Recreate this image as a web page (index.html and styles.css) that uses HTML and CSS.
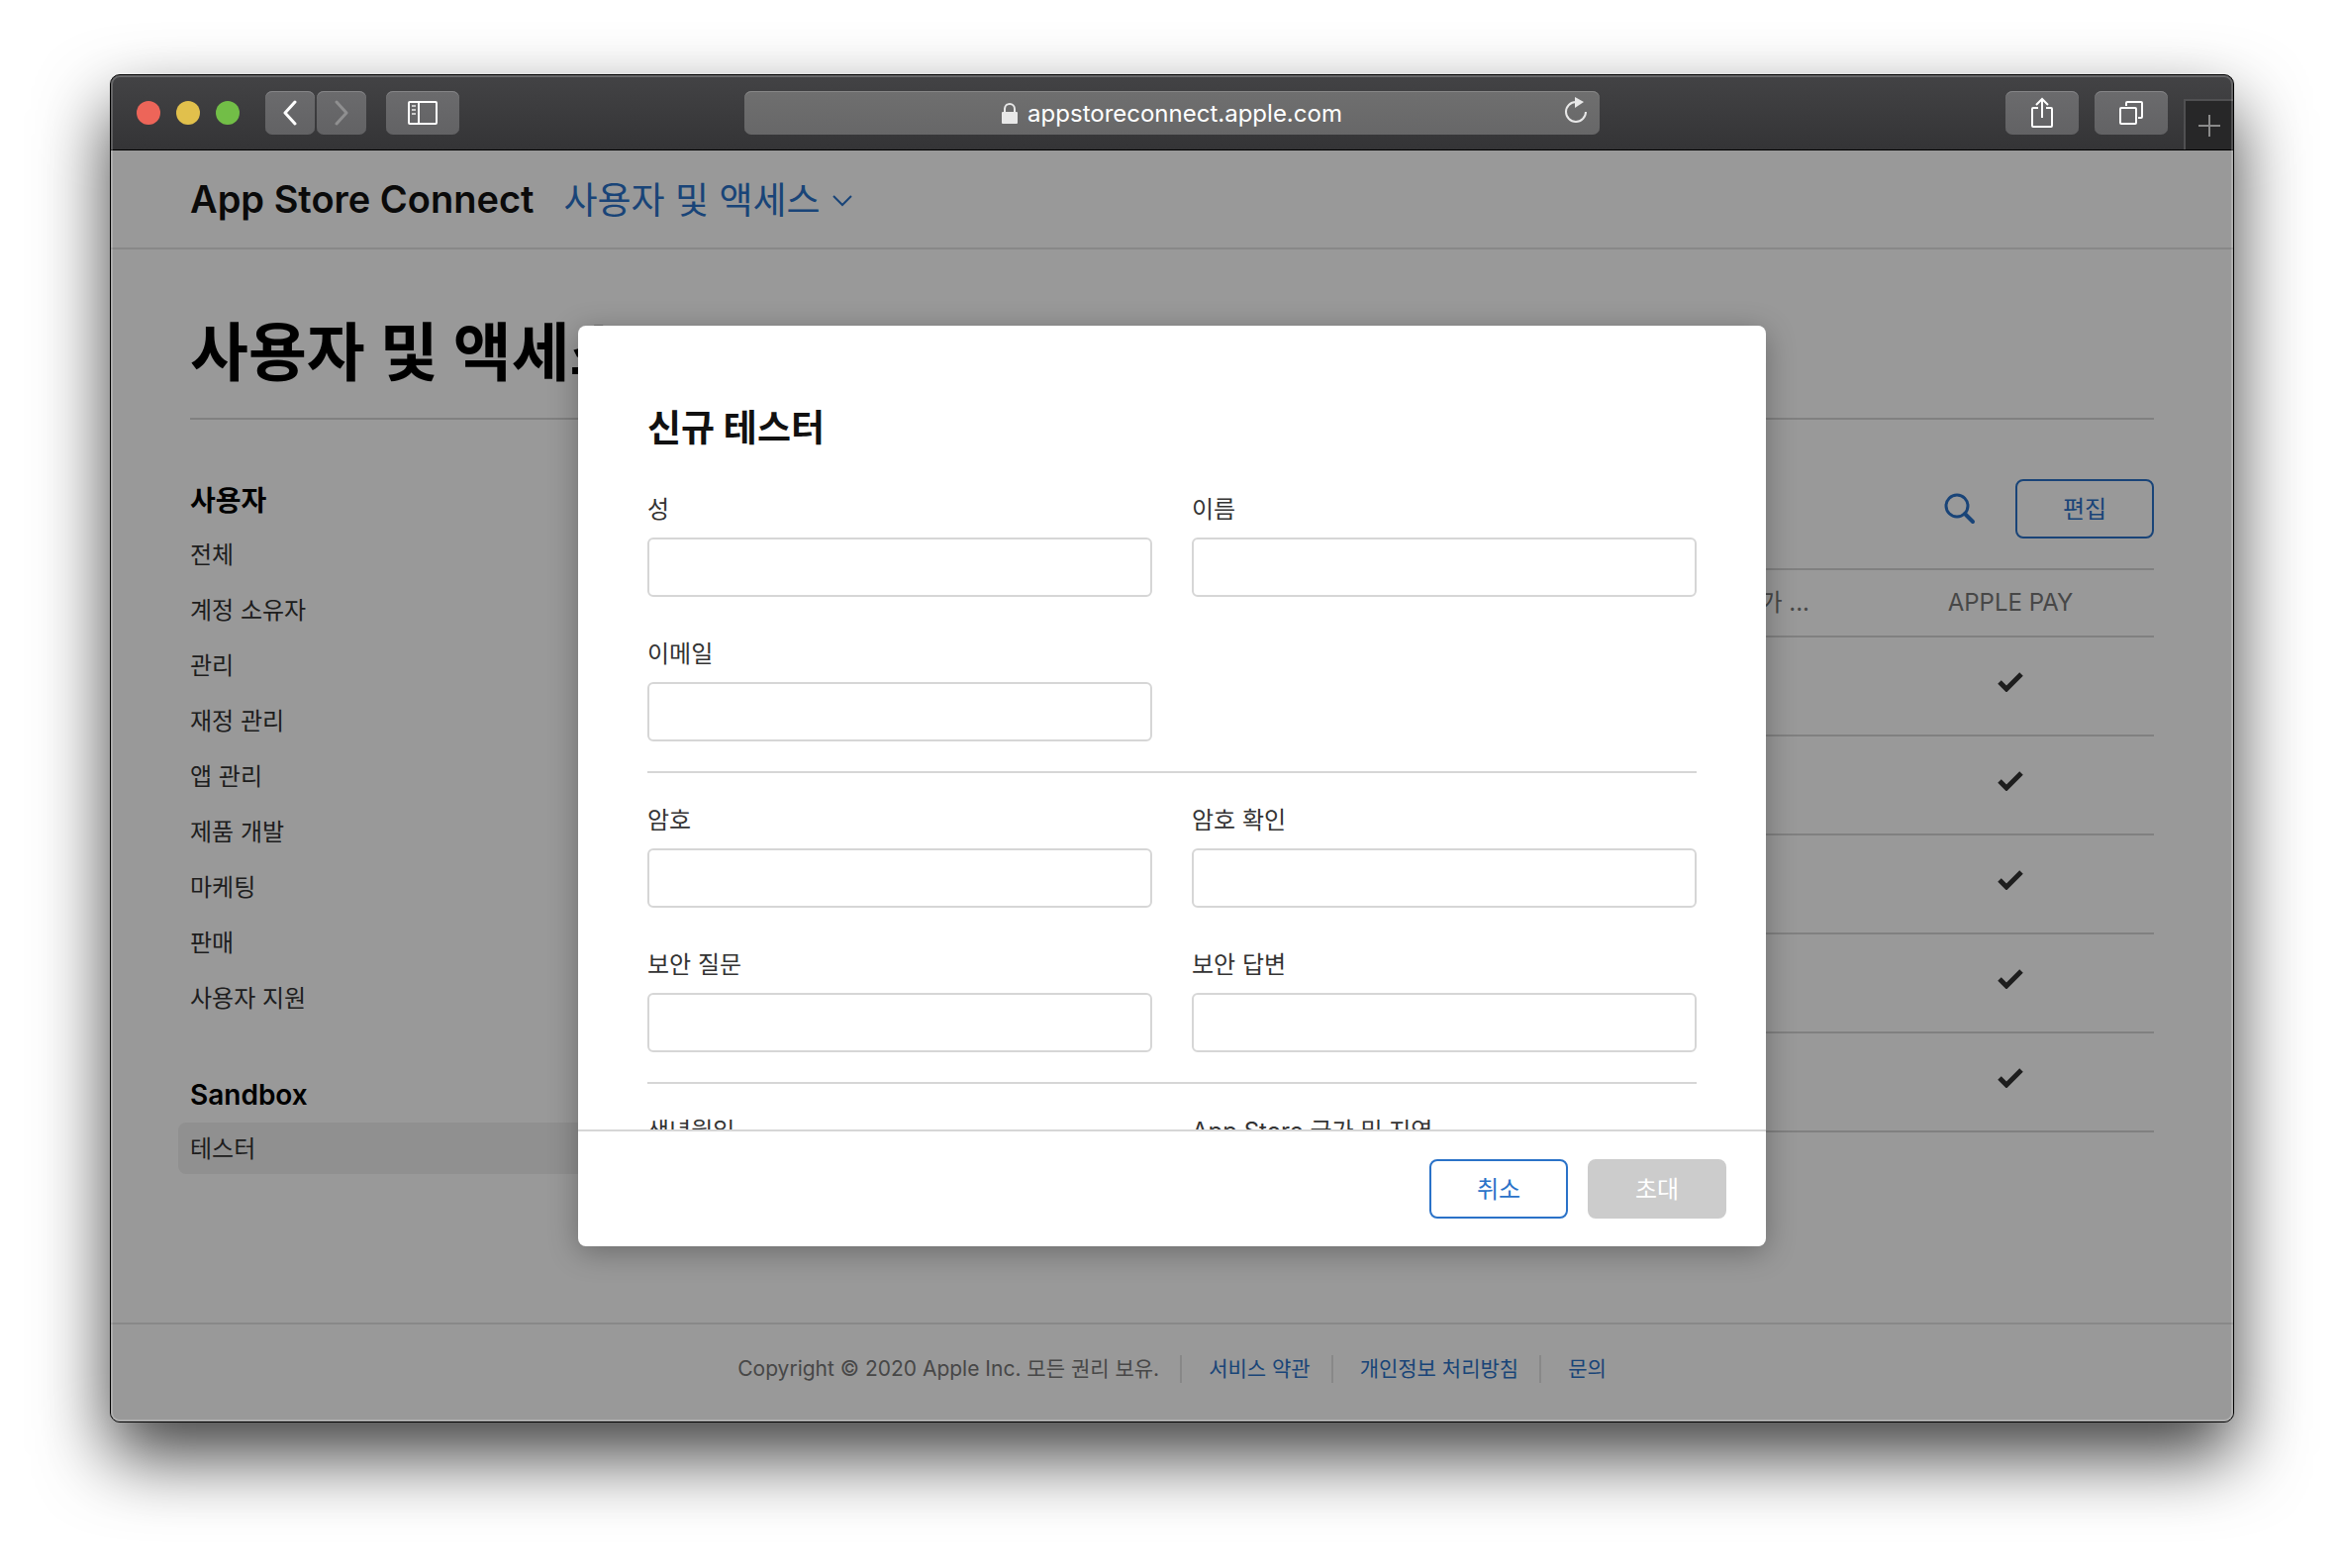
FILE: index.html
```html
<!DOCTYPE html>
<html lang="ko">
<head>
  <meta charset="UTF-8">
  <meta name="viewport" content="width=device-width, initial-scale=1.0">
  <title>App Store Connect</title>
  <link rel="stylesheet" href="styles.css">
</head>
<body>
  <div class="window">
    <!-- 브라우저 툴바 -->
    <div class="toolbar">
      <div class="toolbar-left">
        <div class="lights">
          <span class="light red"></span>
          <span class="light yellow"></span>
          <span class="light green"></span>
        </div>
        <div class="history">
          <button class="tool-btn small" type="button" aria-label="뒤로">
            <svg width="14" height="26" viewBox="0 0 14 26"><path d="M12 2L2 13l10 11" fill="none" stroke="#fff" stroke-width="3" stroke-linecap="round" stroke-linejoin="round"/></svg>
          </button>
          <button class="tool-btn small" type="button" aria-label="앞으로">
            <svg width="14" height="26" viewBox="0 0 14 26"><path d="M2 2l10 11L2 24" fill="none" stroke="#8f8f90" stroke-width="3" stroke-linecap="round" stroke-linejoin="round"/></svg>
          </button>
        </div>
        <button class="tool-btn" type="button" aria-label="사이드바">
          <svg width="30" height="24" viewBox="0 0 30 24" fill="none" stroke="#fff" stroke-width="2">
            <rect x="1" y="1" width="28" height="22" rx="1"/>
            <path d="M11 1v22"/>
            <path d="M4 5h4M4 9h4M4 13h4" stroke="#ccc"/>
          </svg>
        </button>
      </div>

      <div class="address">
        <svg width="16" height="22" viewBox="0 0 16 22"><rect y="9" width="16" height="12" rx="1" fill="#e8e8e8"/><path d="M3 10V6a5 5 0 0 1 10 0v4" fill="none" stroke="#e8e8e8" stroke-width="2"/></svg>
        <span>appstoreconnect.apple.com</span>
        <button class="reload" type="button" aria-label="새로 고침">
          <svg width="24" height="28" viewBox="0 0 24 28"><path d="M12 5a10 10 0 1 0 10 10" fill="none" stroke="#e8e8e8" stroke-width="2"/><path d="M11 0l9 5-9 6z" fill="#e8e8e8"/></svg>
        </button>
      </div>

      <div class="toolbar-right">
        <button class="tool-btn" type="button" aria-label="공유">
          <svg width="24" height="32" viewBox="0 0 24 32" fill="none" stroke="#fff" stroke-width="2" stroke-linejoin="round">
            <path d="M8 11H3a1 1 0 0 0-1 1v17a1 1 0 0 0 1 1h18a1 1 0 0 0 1-1V12a1 1 0 0 0-1-1h-5"/>
            <path d="M12 21V2M6 8l6-6 6 6" stroke-linejoin="miter"/>
          </svg>
        </button>
        <button class="tool-btn" type="button" aria-label="탭 개요">
          <svg width="24" height="24" viewBox="0 0 24 24" fill="none" stroke="#fff" stroke-width="2">
            <rect x="1" y="7" width="16" height="16" rx="1"/>
            <path d="M7 5V2a1 1 0 0 1 1-1h14a1 1 0 0 1 1 1v14a1 1 0 0 1-1 1h-3"/>
          </svg>
        </button>
        <button class="new-tab" type="button" aria-label="새로운 탭">
          <svg width="22" height="22" viewBox="0 0 22 22"><path d="M11 0v22M0 11h22" stroke="#8a8a8a" stroke-width="2"/></svg>
        </button>
      </div>
    </div>

    <div class="page">
      <header class="header">
        <a class="brand" href="#">App Store Connect</a>
        <a class="section-link" href="#">사용자 및 액세스
          <svg width="20" height="12" viewBox="0 0 20 12"><path d="M1 1l9 9 9-9" fill="none" stroke="currentColor" stroke-width="2"/></svg>
        </a>
      </header>

      <main class="main">
        <h1>사용자 및 액세스</h1>
        <div class="columns">
          <nav class="sidebar">
            <h2>사용자</h2>
            <ul>
              <li><a href="#">전체</a></li>
              <li><a href="#">계정 소유자</a></li>
              <li><a href="#">관리</a></li>
              <li><a href="#">재정 관리</a></li>
              <li><a href="#">앱 관리</a></li>
              <li><a href="#">제품 개발</a></li>
              <li><a href="#">마케팅</a></li>
              <li><a href="#">판매</a></li>
              <li><a href="#">사용자 지원</a></li>
            </ul>
            <h2>Sandbox</h2>
            <ul>
              <li><a class="active" href="#">테스터</a></li>
            </ul>
          </nav>

          <section class="testers">
            <div class="actions">
              <button class="search" type="button" aria-label="검색">
                <svg width="32" height="32" viewBox="0 0 32 32" fill="none" stroke="currentColor"><circle cx="13" cy="13" r="11" stroke-width="3"/><path d="M21 21l8 8" stroke-width="4" stroke-linecap="round"/></svg>
              </button>
              <button class="btn" type="button">편집</button>
            </div>
            <table>
              <thead>
                <tr><th class="country">국가 ...</th><th class="pay">APPLE PAY</th></tr>
              </thead>
              <tbody>
                <tr><td></td><td class="pay"><svg class="check" viewBox="0 0 26 20"><path d="M2 10l7 7L24 2" /></svg></td></tr>
                <tr><td></td><td class="pay"><svg class="check" viewBox="0 0 26 20"><path d="M2 10l7 7L24 2" /></svg></td></tr>
                <tr><td></td><td class="pay"><svg class="check" viewBox="0 0 26 20"><path d="M2 10l7 7L24 2" /></svg></td></tr>
                <tr><td></td><td class="pay"><svg class="check" viewBox="0 0 26 20"><path d="M2 10l7 7L24 2" /></svg></td></tr>
                <tr><td></td><td class="pay"><svg class="check" viewBox="0 0 26 20"><path d="M2 10l7 7L24 2" /></svg></td></tr>
              </tbody>
            </table>
          </section>
        </div>
      </main>

      <footer class="footer">
        <span>Copyright © 2020 Apple Inc. 모든 권리 보유.</span>
        <a href="#">서비스 약관</a>
        <a href="#">개인정보 처리방침</a>
        <a href="#">문의</a>
      </footer>

      <!-- 신규 테스터 모달 -->
      <div class="overlay">
        <form class="modal" role="dialog" aria-labelledby="modalTitle">
          <div class="modal-body">
            <h2 id="modalTitle">신규 테스터</h2>
            <div class="fields">
              <div class="field"><label for="lastName">성</label><input type="text" id="lastName"></div>
              <div class="field"><label for="firstName">이름</label><input type="text" id="firstName"></div>
              <div class="field"><label for="email">이메일</label><input type="email" id="email"></div>
            </div>
            <div class="fields">
              <div class="field"><label for="password">암호</label><input type="password" id="password"></div>
              <div class="field"><label for="confirm">암호 확인</label><input type="password" id="confirm"></div>
              <div class="field"><label for="question">보안 질문</label><input type="text" id="question"></div>
              <div class="field"><label for="answer">보안 답변</label><input type="text" id="answer"></div>
            </div>
            <div class="fields">
              <div class="field"><label for="birth">생년월일</label><input type="text" id="birth"></div>
              <div class="field"><label for="region">App Store 국가 및 지역</label><input type="text" id="region"></div>
            </div>
          </div>
          <div class="modal-footer">
            <button class="btn" type="button">취소</button>
            <button class="btn" type="submit" disabled>초대</button>
          </div>
        </form>
      </div>
    </div>
  </div>
</body>
</html>
```

FILE: styles.css
```css
* {
  margin: 0;
  padding: 0;
  box-sizing: border-box;
}
body {
  min-height: 100vh;
  padding: 75px 111px 147px;
  display: flex;
  background: #fff;
  color: #333;
  font-family: Inter, "Noto Sans CJK KR", sans-serif;
  font-size: 24px;
  line-height: 32px;
}
a {
  color: #2a72c8;
  text-decoration: none;
}
button {
  font: inherit;
  border: none;
  background: none;
  cursor: pointer;
}
svg {
  display: block;
}
ul {
  list-style: none;
}

.window {
  flex: 1;
  min-width: 0;
  display: flex;
  flex-direction: column;
  position: relative;
  border: 1px solid #000;
  border-radius: 10px;
  overflow: hidden;
  background: #3a3a3c;
  box-shadow: 0 34px 72px rgba(0, 0, 0, 0.75);
}
/* light edge inside the window frame */
.window::after {
  content: "";
  position: absolute;
  inset: 0;
  border: 2px solid rgba(255, 255, 255, 0.2);
  border-radius: 9px;
  pointer-events: none;
}

/* toolbar */
.toolbar {
  height: 76px;
  padding: 1px 0 0 26px;
  display: grid;
  grid-template-columns: 1fr minmax(0, 864px) 1fr;
  align-items: center;
  background: linear-gradient(#434345, #343436);
  border-bottom: 1px solid #000;
}
.toolbar-left {
  display: flex;
  align-items: center;
  gap: 20px;
  margin-right: 26px;
}
.lights {
  display: flex;
  gap: 16px;
  margin-right: 6px;
}
.light {
  width: 24px;
  height: 24px;
  border-radius: 50%;
}
.red { background: #ed6559; }
.yellow { background: #e1c04c; }
.green { background: #72be47; }
.history {
  display: flex;
  gap: 2px;
}
.tool-btn {
  width: 74px;
  height: 44px;
  display: flex;
  align-items: center;
  justify-content: center;
  border-radius: 7px;
  background: linear-gradient(#6b6b6d, #626264);
  box-shadow: inset 0 1px #858587;
}
.tool-btn.small {
  width: 50px;
}
.address {
  height: 44px;
  margin: 0 13px 0 -13px;
  padding-top: 2px;
  display: flex;
  align-items: center;
  justify-content: center;
  gap: 10px;
  position: relative;
  border-radius: 7px;
  background: linear-gradient(#6f6f6f, #676768);
  box-shadow: inset 0 1px #888;
  color: #fff;
}
.reload {
  position: absolute;
  right: 12px;
  top: 6px;
}
.toolbar-right {
  height: 74px;
  display: flex;
  align-items: center;
  justify-content: flex-end;
  gap: 16px;
}
.new-tab {
  width: 50px;
  height: 51px;
  align-self: flex-end;
  display: flex;
  align-items: center;
  justify-content: center;
  background: #272728;
  border-top: 2px solid #505052;
  border-left: 2px solid #505052;
}

/* page */
.page {
  flex: 1;
  display: flex;
  flex-direction: column;
  position: relative;
  background: #fff;
}
.header {
  height: 100px;
  padding: 0 80px;
  display: flex;
  align-items: center;
  gap: 30px;
  border-bottom: 2px solid #e3e3e3;
  font-size: 37px;
  line-height: 56px;
}
.brand {
  color: #111;
  font-size: 38px;
  font-weight: 600;
}
.section-link {
  display: flex;
  align-items: center;
  gap: 12px;
  padding-top: 4px;
}
.main {
  flex: 1;
  padding: 0 80px;
}
h1 {
  padding: 64px 0 26px;
  border-bottom: 2px solid #d6d6d6;
  color: #000;
  font-size: 64px;
  line-height: 80px;
}
.columns {
  display: flex;
  padding: 60px 0;
}
.sidebar {
  width: 420px;
}
.sidebar h2 {
  padding-top: 2px;
  margin-bottom: 8px;
  color: #000;
  font-size: 28px;
  line-height: 40px;
  font-weight: 600;
}
.sidebar ul {
  display: grid;
  gap: 4px;
  margin-bottom: 50px;
}
.sidebar ul:last-child {
  margin-bottom: 0;
}
.sidebar a {
  display: block;
  margin-left: -12px;
  padding: 11px 12px 9px;
  border-radius: 8px;
  color: #333;
}
.sidebar .active {
  background: #f0f0f0;
}
.testers {
  flex: 1;
  margin-left: 60px;
}
.actions {
  display: flex;
  align-items: center;
  justify-content: flex-end;
  gap: 40px;
  margin-bottom: 30px;
}
.search {
  color: #2a72c8;
}
.btn {
  width: 140px;
  height: 60px;
  padding-top: 2px;
  border: 2px solid #2a72c8;
  border-radius: 8px;
  color: #2a72c8;
}
.btn:disabled {
  border-color: #ccc;
  background: #ccc;
  color: #fff;
  cursor: default;
}
table {
  width: 100%;
  border-spacing: 0;
}
th {
  height: 70px;
  border-top: 2px solid #d6d6d6;
  border-bottom: 2px solid #d6d6d6;
  color: #777;
  font-weight: 400;
}
td {
  height: 100px;
  border-bottom: 2px solid #d6d6d6;
}
.country {
  padding-right: 58px;
  text-align: right;
}
.pay {
  width: 290px;
  text-align: center;
}
.check {
  width: 26px;
  height: 20px;
  margin: 0 auto 8px;
  fill: none;
  stroke: #333;
  stroke-width: 5;
}

.footer {
  height: 100px;
  padding-bottom: 8px;
  display: flex;
  align-items: center;
  justify-content: center;
  border-top: 2px solid #e3e3e3;
  color: #777;
  font-size: 21px;
  line-height: 28px;
}
.footer a {
  margin-left: 21px;
  padding-left: 27px;
  border-left: 2px solid #e3e3e3;
}

/* modal */
.overlay {
  position: absolute;
  inset: 0;
  display: flex;
  align-items: center;
  justify-content: center;
  background: rgba(0, 0, 0, 0.4);
}
.modal {
  width: 1200px;
  max-width: 90%;
  height: calc(100% - 354px);
  display: flex;
  flex-direction: column;
  border-radius: 8px;
  overflow: hidden;
  background: #fff;
  box-shadow: 0 6px 30px rgba(0, 0, 0, 0.3);
}
.modal-body {
  flex: 1;
  min-height: 0;
  padding: 80px 70px 0;
  overflow: hidden;
}
.modal-body h2 {
  margin-bottom: 42px;
  color: #111;
  font-size: 37px;
  line-height: 48px;
}
.fields {
  display: grid;
  grid-template-columns: 1fr 1fr;
  gap: 42px 40px;
}
.fields + .fields {
  margin-top: 30px;
  padding-top: 32px;
  border-top: 2px solid #d6d6d6;
}
.field {
  display: flex;
  flex-direction: column;
  gap: 12px;
}
.field input {
  width: 100%;
  height: 60px;
  padding: 0 16px;
  border: 2px solid #d6d6d6;
  border-radius: 6px;
  background: #fff;
  font: inherit;
}
.modal-footer {
  display: flex;
  justify-content: flex-end;
  gap: 20px;
  padding: 28px 40px;
  border-top: 2px solid #d6d6d6;
}
```
